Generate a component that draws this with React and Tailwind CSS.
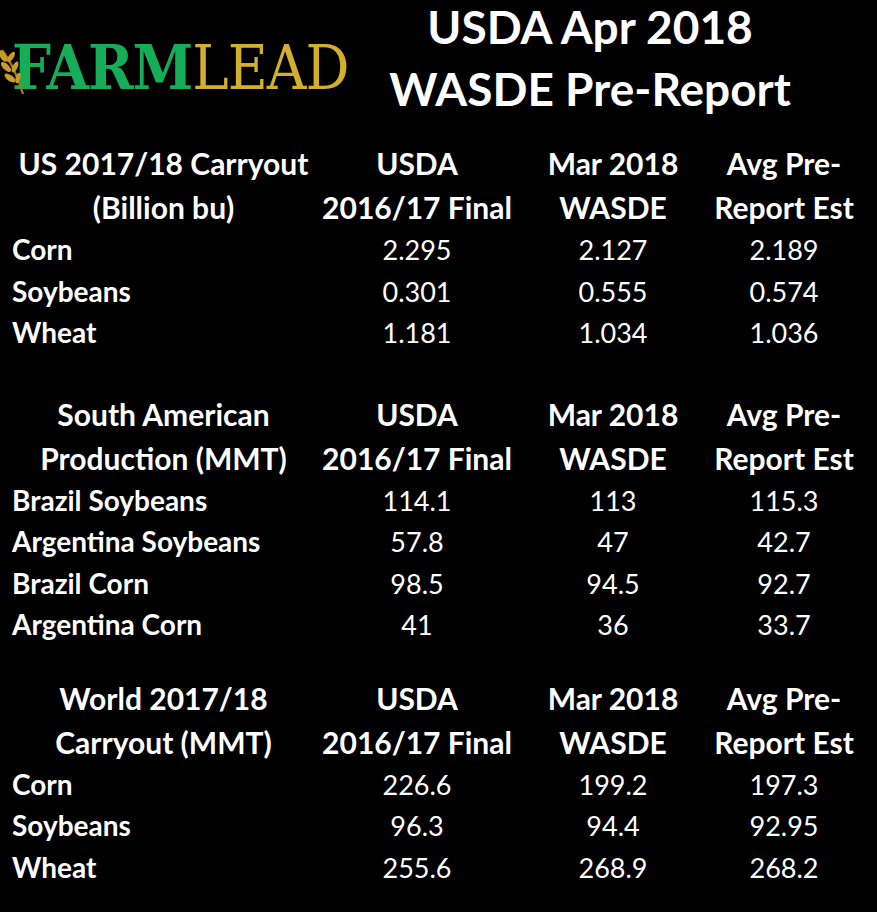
import React from 'react';

const sections = [
  {
    title: ['US 2017/18 Carryout', '(Billion bu)'],
    gapTop: 'mt-[141px]',
    rows: [
      ['Corn', '2.295', '2.127', '2.189'],
      ['Soybeans', '0.301', '0.555', '0.574'],
      ['Wheat', '1.181', '1.034', '1.036'],
    ],
  },
  {
    title: ['South American', 'Production (MMT)'],
    gapTop: 'mt-[38px]',
    rows: [
      ['Brazil Soybeans', '114.1', '113', '115.3'],
      ['Argentina Soybeans', '57.8', '47', '42.7'],
      ['Brazil Corn', '98.5', '94.5', '92.7'],
      ['Argentina Corn', '41', '36', '33.7'],
    ],
  },
  {
    title: ['World 2017/18', 'Carryout (MMT)'],
    gapTop: 'mt-[30px]',
    rows: [
      ['Corn', '226.6', '199.2', '197.3'],
      ['Soybeans', '96.3', '94.4', '92.95'],
      ['Wheat', '255.6', '268.9', '268.2'],
    ],
  },
];

const colHeads = [
  ['USDA', '2016/17 Final'],
  ['Mar 2018', 'WASDE'],
  ['Avg Pre-', 'Report Est'],
];

const Wheat = () => (
  <svg className="absolute left-0 top-[48px]" width="28" height="48" viewBox="0 0 28 48">
    <path d="M2 2 C10 12 17 27 23 46" stroke="#a57a1c" strokeWidth="2.2" fill="none" />
    <g fill="#c99b2b">
      <ellipse cx="3" cy="8" rx="3" ry="6.5" transform="rotate(-30 3 8)" />
      <ellipse cx="11" cy="9" rx="2.6" ry="6" transform="rotate(35 11 9)" />
      <ellipse cx="6" cy="19" rx="3" ry="6.5" transform="rotate(-45 6 19)" />
      <ellipse cx="15" cy="19" rx="2.6" ry="6" transform="rotate(25 15 19)" />
      <ellipse cx="10" cy="30" rx="3" ry="6.5" transform="rotate(-55 10 30)" />
      <ellipse cx="18" cy="30" rx="2.4" ry="5.5" transform="rotate(15 18 30)" />
    </g>
  </svg>
);

const Section = ({ section }) => (
  <div className={`${section.gapTop} grid grid-cols-[307px_200px_192px_150px]`}>
    <div className="text-center font-bold text-[30px] leading-[44px] whitespace-nowrap">
      <div>{section.title[0]}</div>
      <div>{section.title[1]}</div>
    </div>
    {colHeads.map((h, i) => (
      <div key={i} className="text-center font-bold text-[30px] leading-[44px] whitespace-nowrap">
        <div>{h[0]}</div>
        <div>{h[1]}</div>
      </div>
    ))}
    {section.rows.map((r, i) => (
      <React.Fragment key={i}>
        <div className="pl-[2px] font-bold text-[28px] leading-[41.5px] whitespace-nowrap">{r[0]}</div>
        <div className="text-center leading-[41.5px]">{r[1]}</div>
        <div className="text-center leading-[41.5px]">{r[2]}</div>
        <div className="text-center leading-[41.5px]">{r[3]}</div>
      </React.Fragment>
    ))}
  </div>
);

export default function App() {
  return (
    <div className="relative w-[877px] h-[912px] bg-black text-white overflow-hidden font-['Lato',sans-serif] text-[27px]">
      <div className="absolute top-0 left-0 right-0 flex">
        <div className="relative w-[370px] h-[130px]">
          <Wheat />
          <div className="pl-[12px] pt-[29px] font-['DejaVu_Serif_Condensed','DejaVu_Serif',serif] text-[61px] leading-[78px] tracking-[-1px]">
            <span className="font-bold text-[#15ad58]">FARM</span>
            <span className="text-[#d2b02e]">LEAD</span>
          </div>
        </div>
        <div className="w-[440px] -mt-[4px] text-center font-bold text-[46px] leading-[62px]">
          <div>USDA Apr 2018</div>
          <div>WASDE Pre-Report</div>
        </div>
      </div>
      <div className="px-[10px] flex flex-col">
        {sections.map((s, i) => (
          <Section key={i} section={s} />
        ))}
      </div>
    </div>
  );
}
